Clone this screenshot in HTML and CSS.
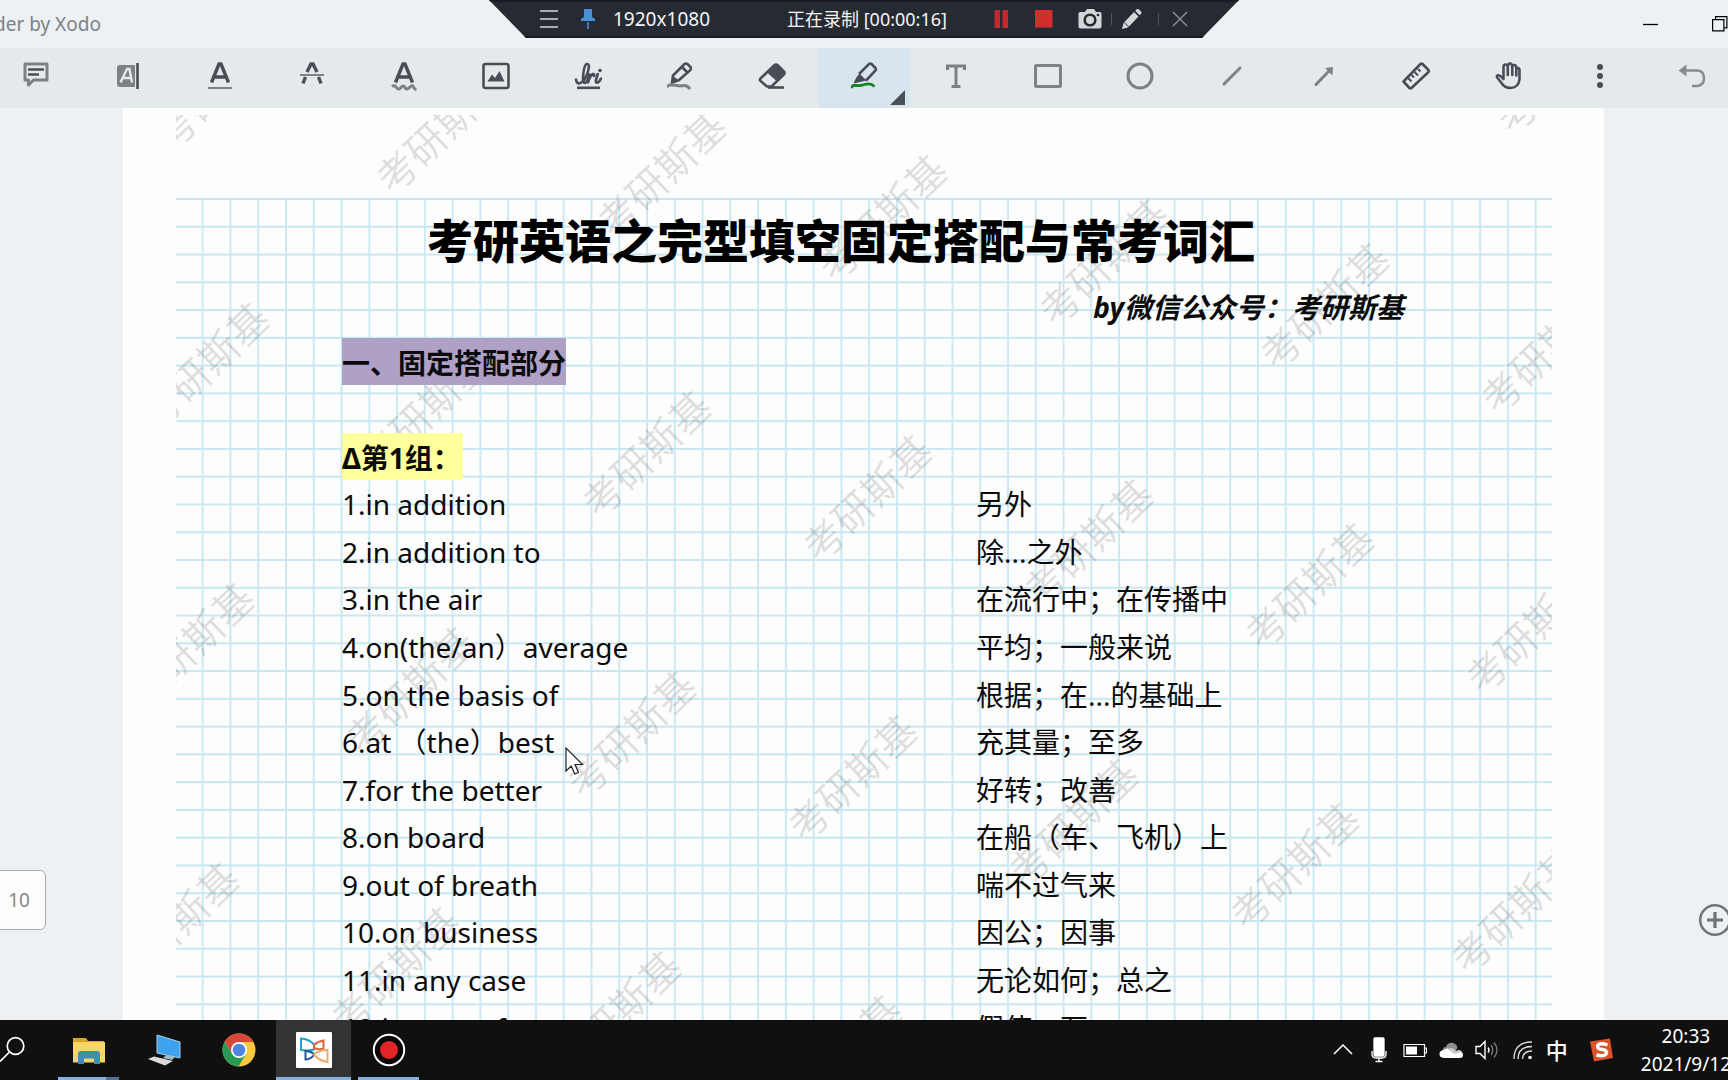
FILE: index.html
```html
<!DOCTYPE html>
<html lang="zh-CN">
<head>
<meta charset="utf-8">
<title>PDF Reader by Xodo</title>
<link rel="stylesheet" href="styles.css">
</head>
<body>
<header class="titlebar">
  <span class="app-name">der by Xodo</span>
  <div class="window-controls">
    <button class="plain" aria-label="Minimize"><svg width="16" height="16" viewBox="0 0 16 16"><path d="M0 8.5H15" stroke="#000" stroke-width="1.3"/></svg></button>
    <button class="plain" aria-label="Restore"><svg width="16" height="16" viewBox="0 0 16 16" fill="none" stroke="#000" stroke-width="1.2"><path d="M.6 3.6h11.3v11.3H.6zM3.6 3.6V.6h11.3v11.3h-3"/></svg></button>
  </div>
</header>

<section class="recorder" aria-label="Screen recorder">
  <button class="plain rec-menu" aria-label="Menu"><svg width="18" height="20" viewBox="0 0 18 20" stroke="#a9adb0" stroke-width="1.8"><path d="M0 2h18M0 10h18M0 18h18"/></svg></button>
  <button class="plain rec-pin" aria-label="Pin"><svg width="16" height="22" viewBox="0 0 16 22" fill="#4a90d9"><path d="M4 1h8v8l3 2v2H1v-2l3-2zM7.200 14h1.600v7H7.200z"/></svg></button>
  <span class="rec-size">1920x1080</span>
  <span class="rec-time">正在录制 [00:00:16]</span>
  <div class="rec-actions">
    <button class="plain" aria-label="Pause"><svg width="15" height="20" viewBox="0 0 15 20" fill="#c02a2e"><path d="M.5 1h5.500v18H.5zM8.500 1H14v18H8.500z"/></svg></button>
    <button class="plain" aria-label="Stop"><svg width="18" height="20" viewBox="0 0 18 20"><path d="M0 1h17.500v17.500H0z" fill="#d12e2c"/></svg></button>
    <button class="plain" aria-label="Snapshot"><svg width="24" height="22" viewBox="0 0 24 22"><path d="M2 4h5l2-3h7l2 3h4q1.500 0 1.500 1.500v13q0 2-2 2h-19q-2 0-2-2v-13Q.5 4 2 4z" fill="#d3d6d8"/><circle cx="12" cy="12" r="5.300" fill="none" stroke="#262b33" stroke-width="2.600"/><circle cx="20" cy="7" r="1.300" fill="#262b33"/></svg></button>
    <i class="rec-divider"></i>
    <button class="plain" aria-label="Draw"><svg width="20" height="22" viewBox="0 0 20 22" fill="#d3d6d8"><path d="M0 21l1.500-6L12 4l4.500 4.500L6 19.500zM13.200 2.800l1.500-1.500q1-.8 2 0l2.500 2.500q.8 1 0 2l-1.500 1.500z"/><path d="M2.300 14.500l4.200 4.300" stroke="#262b33" stroke-width="1"/></svg></button>
    <i class="rec-divider"></i>
    <button class="plain" aria-label="Close"><svg width="16" height="16" viewBox="0 0 16 16" stroke="#8f9397" stroke-width="1.400"><path d="M1 1l14 14M15 1L1 15"/></svg></button>
  </div>
</section>

<nav class="toolbar" aria-label="Annotation tools">
  <button class="tool" aria-label="Note"><svg viewBox="0 0 30 30"><path d="M4 3h22v16H12.500l-5 5v-5H4z" class="g-line" stroke-linejoin="round"/><path d="M7 8.500h16M7 13.500h11" class="d-line"/></svg></button>
  <button class="tool" aria-label="Highlight text"><svg viewBox="0 0 30 30"><path d="M5 4h17v22H7q-3 0-3-3V7q0-3 3-3z" class="g-fill"/><path d="M7.500 21.500L14 8h2.500l2.500 13.500M10 17h8" fill="none" stroke="#e4e9ec" stroke-width="2.400"/><path d="M24.500 2v26" class="d-line"/></svg></button>
  <button class="tool" aria-label="Underline"><svg viewBox="0 0 30 30"><path d="M6.500 21.500L14 3h2l7.500 18.500M9.500 16h11" class="d-line bold"/><path d="M3 27h24" class="g-line thin"/></svg></button>
  <button class="tool" aria-label="Strikeout"><svg viewBox="0 0 30 30"><path d="M10 11l4-8h2l4 8M8.500 16L6 22.500M21.500 16l2.500 6.500" class="d-line bold"/><path d="M3 14h24" class="g-line thin"/></svg></button>
  <button class="tool" aria-label="Squiggly"><svg viewBox="0 0 30 30"><path d="M6.500 21.500L14 3h2l7.500 18.500M9.500 16h11" class="d-line bold"/><path d="M3 25.500q2.500-2 4.500 1t4.500 0 4 0 4.500 0 4-.5 3 2.500" class="g-line"/></svg></button>
  <button class="tool" aria-label="Image"><svg viewBox="0 0 30 30"><rect x="2.500" y="3" width="25" height="24" rx="2" class="d-line"/><path d="M6.500 20.500l4.500-7 3 3.500 4.500-7 5 10.500z" class="d-fill"/></svg></button>
  <button class="tool" aria-label="Signature"><svg viewBox="0 0 30 30"><path d="M3 18.500q.5 5 4.500 3.500Q14 18 16 6q0-3.500-2.500-3Q10.500 5 10 17q0 5 2 5 3-2 4.500-8.500L15 21.500q2-7 5-8.500 2 0 1 2M24.800 13l-2 6.500q0 3 2 2 2-1 3.200-4" class="d-line" stroke-linecap="round" stroke-linejoin="round"/><circle cx="27" cy="9.500" r="1.800" class="d-fill"/><path d="M4 26.800h23" class="d-line"/></svg></button>
  <button class="tool" aria-label="Pencil"><svg viewBox="0 0 30 30"><path d="M8 14.500L19.500 3q1.500-1 3 0l3 3q1 1.500 0 3L14 19l-7 2.500z" class="d-line"/><path d="M17 6l5.500 5.500" class="d-line"/><path d="M8 14.500L13.500 19.500 6 22.500z" class="d-fill"/><path d="M4 26q-2-2 2-2t9 1q7-2 10 3" class="g-line"/></svg></button>
  <button class="tool" aria-label="Eraser"><svg viewBox="0 0 30 30"><path d="M3 18L17.500 4q1.500-1 3 0l6.500 6.500q1 1.500 0 3L14.500 25.500H10L3 19.500z" class="d-line"/><path d="M10 11.500L18 4h2l7.500 7.500v2L20 20.500z" class="d-fill"/><path d="M11 26.500h16" class="d-line"/></svg></button>
  <button class="tool active" aria-label="Highlighter" aria-pressed="true"><svg viewBox="0 0 30 30"><path d="M10 13L20 3q1.500-1 2.500 0l4 4q.8 1.500 0 2.500L17 19.500" class="d-line"/><path d="M10.500 12.500l7 7L11 21l-6.500 1.500L7 17z" class="d-fill"/><path d="M3.500 27q-1.500-3 3-2.500 5 .5 9-1 6-2 10 2" fill="none" stroke="#15811f" stroke-width="2.800"/></svg></button>
  <button class="tool" aria-label="Text"><svg viewBox="0 0 30 30"><path d="M6.500 9V5h17v4M15 5v20.500M10.500 25.500h9" class="g-line"/></svg></button>
  <button class="tool" aria-label="Rectangle"><svg viewBox="0 0 30 30"><rect x="2.500" y="4.500" width="25" height="21" rx="1" class="g-line"/></svg></button>
  <button class="tool" aria-label="Ellipse"><svg viewBox="0 0 30 30"><circle cx="15" cy="15" r="12" class="g-line"/></svg></button>
  <button class="tool" aria-label="Line"><svg viewBox="0 0 30 30"><path d="M7 23L23 7" class="g-line" stroke-linecap="round"/></svg></button>
  <button class="tool" aria-label="Arrow"><svg viewBox="0 0 30 30"><path d="M7 23.500L20 10" class="g-line" stroke-linecap="round"/><path d="M16 7l8-1-.5 8.500z" class="g-fill"/></svg></button>
  <button class="tool" aria-label="Ruler"><svg viewBox="0 0 30 30"><path d="M2.500 20.500L19.500 3q1-.8 2 0l6 6q.8 1 0 2L10.500 27q-1 .8-2 0z" class="d-line" stroke-linejoin="round"/><path d="M7 17l3.500 3.500M10.500 14l2.500 2.500M13.500 11l3.500 3.500M17 8l2.500 2.500" class="d-line thin"/></svg></button>
  <button class="tool" aria-label="Pan"><svg viewBox="0 0 30 30" stroke-linecap="round" stroke-linejoin="round"><path d="M10.500 17V6q0-2.500 2-2.500T14.800 6q0-3.500 2.200-3.500T19.300 6q.2-2 2-2t2 2.500v2q.2-1.500 1.600-1.500t1.600 2V18q-.5 8.500-9 9-6 0-9-5l-4-5q-1.500-2 .5-2.800 2-.2 5.500 3.800M14.800 6v8M19.300 6v8M23.300 8v6.500" class="d-line"/></svg></button>
  <button class="tool" aria-label="More"><svg viewBox="0 0 30 30" class="d-fill"><circle cx="15" cy="6" r="3"/><circle cx="15" cy="15" r="3"/><circle cx="15" cy="24" r="3"/></svg></button>
  <button class="tool" aria-label="Undo"><svg viewBox="0 0 30 30"><path d="M8 9.500h12.500q6.500.5 6.500 7.500t-6.500 8H15" fill="none" stroke="#898c8f" stroke-width="2.600"/><path d="M1.500 9.500L9.500 3.500v12z" fill="#898c8f"/></svg></button>
</nav>

<main class="viewer">
  <article class="page">
    <svg class="paper" aria-hidden="true">
      <defs>
        <pattern id="grid" x="25.700" y="83" width="27.770" height="27.770" patternUnits="userSpaceOnUse"><path d="M0 1H28M1 0V28" stroke="#c8e7f1" stroke-width="1.800"/></pattern>
        <g id="marks">
          <text class="mark" transform="translate(28 251) rotate(-44)">考研斯基</text>
          <text class="mark" transform="translate(249 295) rotate(-44)">考研斯基</text>
          <text class="mark" transform="translate(470 339) rotate(-44)">考研斯基</text>
          <text class="mark" transform="translate(691 383) rotate(-44)">考研斯基</text>
          <text class="mark" transform="translate(912 427) rotate(-44)">考研斯基</text>
          <text class="mark" transform="translate(1133 471) rotate(-44)">考研斯基</text>
          <text class="mark" transform="translate(1354 515) rotate(-44)">考研斯基</text>
        </g>
      </defs>
      <rect y="83" width="100%" height="100%" fill="url(#grid)"/>
      <use href="#marks" x="30" y="-560"/>
      <use href="#marks" x="15" y="-280"/>
      <use href="#marks"/>
      <use href="#marks" x="-15" y="280"/>
      <use href="#marks" x="-30" y="560"/>
    </svg>
    <div class="content">
      <h1>考研英语之完型填空固定搭配与常考词汇</h1>
      <p class="byline">by微信公众号：考研斯基</p>
      <h2><span class="hl purple">一、固定搭配部分</span></h2>
      <h3><span class="hl yellow">Δ第1组：</span></h3>
      <table class="words">
        <tbody>
          <tr><td>1.in addition</td><td>另外</td></tr>
          <tr><td>2.in addition to</td><td>除...之外</td></tr>
          <tr><td>3.in the air</td><td>在流行中；在传播中</td></tr>
          <tr><td>4.on(the/an）average</td><td>平均；一般来说</td></tr>
          <tr><td>5.on the basis of</td><td>根据；在...的基础上</td></tr>
          <tr><td>6.at （the）best</td><td>充其量；至多</td></tr>
          <tr><td>7.for the better</td><td>好转；改善</td></tr>
          <tr><td>8.on board</td><td>在船（车、飞机）上</td></tr>
          <tr><td>9.out of breath</td><td>喘不过气来</td></tr>
          <tr><td>10.on business</td><td>因公；因事</td></tr>
          <tr><td>11.in any case</td><td>无论如何；总之</td></tr>
          <tr><td>12.in case of</td><td>假使；万一</td></tr>
        </tbody>
      </table>
    </div>
  </article>
  <button class="page-number" aria-label="Page">10</button>
  <button class="plain zoom-in" aria-label="Zoom in"><svg width="34" height="34" viewBox="0 0 34 34" fill="none" stroke="#6f7477"><circle cx="17" cy="17" r="14.800" stroke-width="2.500"/><path d="M17 9v16M9 17h16" stroke-width="3.200"/></svg></button>
  <svg class="cursor" width="19" height="28" viewBox="0 0 19 28" aria-hidden="true"><path d="M1 1v23l5.200-5 3.600 8 3.700-1.600-3.500-7.900H17.500z" fill="#fff" stroke="#222" stroke-width="1.200"/></svg>
</main>

<footer class="taskbar">
  <div class="apps">
    <button class="app" aria-label="Search"><svg width="28" height="32" viewBox="0 0 28 32" fill="none" stroke="#fff" stroke-width="1.700"><circle cx="15.500" cy="12" r="8.300"/><path d="M9.500 18L0 27.500"/></svg></button>
    <button class="app open stacked" aria-label="File Explorer"><svg width="34" height="32" viewBox="0 0 34 32"><path d="M1 4h13l2 3h16v7H1z" fill="#d9a428"/><path d="M1 8h32v20.500H1z" fill="#f8d568"/><path d="M6 30V20q0-3 3-3h16q3 0 3 3v10h-6v-5.500H12V30z" fill="#3d8fb5"/></svg></button>
    <button class="app" aria-label="This PC"><svg width="34" height="34" viewBox="0 0 34 34"><path d="M10 2l23 7v16l-23-5z" fill="#3fa2ee" stroke="#a8cfe6" stroke-width="1"/><path d="M19 22l9 2-3 3-9-2z" fill="#9fb9c6"/><path d="M1 26l6-2.500 19 4.500-8 4.500z" fill="#d8dadb"/></svg></button>
    <button class="app" aria-label="Chrome"><svg width="34" height="34" viewBox="0 0 34 34"><circle cx="17" cy="17" r="16.500" fill="#fbc93d"/><path d="M17 9h14.400A16.500 16.500 0 0 0 2.700 8.800L10 21z" fill="#d9463a"/><path d="M2.700 8.800A16.500 16.500 0 0 0 16.500 33.500L24 21 17 17l-7 4z" fill="#279a55"/><circle cx="17" cy="17" r="8" fill="#fff"/><circle cx="17" cy="17" r="6.300" fill="#4c84e0"/></svg></button>
    <button class="app open current" aria-label="Xodo"><svg width="36" height="36" viewBox="0 0 36 36" fill="none" stroke-width="2"><rect width="36" height="36" rx="1" fill="#fff"/><path d="M5 6.500q8 .5 13 6v5Q12 19 5 18z" stroke="#1f9fc9"/><path d="M27.500 8.500q-6 1-9.500 4.500v3q5 2 9.500.5z" stroke="#d9653c"/><path d="M9.500 19q5 0 8.500 3v1q-3 4-8.500 4.500z" stroke="#255a91"/><path d="M31.500 18q-8 0-13 4v1q5 6 13 7z" stroke="#efae68"/></svg></button>
    <button class="app open" aria-label="Recorder"><svg width="34" height="34" viewBox="0 0 34 34"><circle cx="17" cy="17" r="15.200" fill="#0a0405" stroke="#fff" stroke-width="2"/><circle cx="17" cy="17" r="9" fill="#e22427"/></svg></button>
  </div>
  <div class="tray">
    <span class="status"><svg width="20" height="26" viewBox="0 0 20 26" fill="none" stroke="#fff" stroke-width="1.500"><path d="M1 17l9-9 9 9"/></svg></span>
    <span class="status"><svg width="16" height="26" viewBox="0 0 16 26" fill="none" stroke="#fff" stroke-width="1.300"><rect x="3" y="1" width="10" height="18" rx="1" fill="#fff"/><path d="M1 14v3q0 4 4 4h6q4 0 4-4v-3M8 21v3.500M4.500 24.500h7"/></svg></span>
    <span class="status"><svg width="24" height="26" viewBox="0 0 24 26" fill="none" stroke="#fff" stroke-width="1.200"><path d="M1 7.500h20.500v12H1zM21.500 11h2v5h-2"/><path d="M3 9.500h11v8H3z" fill="#fff" stroke="none"/></svg></span>
    <span class="status"><svg width="24" height="26" viewBox="0 0 24 26"><path d="M4 14q-1-4 3-4 2-5 7-4 4 1 4.500 5l-6 8z" fill="#8d8d8d"/><path d="M5 21q-5-.5-4.500-4.500Q1 13 5 13q3-3 7 0l4 2q2-2.500 5-1 3 1 3 4t-3 3z" fill="#fff"/><path d="M9 12q5-3 8 2l3-1q2 0 3 2l-8 2z" fill="#c9c9c9"/></svg></span>
    <span class="status"><svg width="24" height="26" viewBox="0 0 24 26" fill="none" stroke="#fff" stroke-width="1.400"><path d="M1 9.500h4L10 4.500v17L5 16.500H1z"/><path d="M13 10.500q2 2.500 0 5"/><path d="M16 8q3.500 5 0 10M19 5.500q6 7.500 0 15" stroke="#777"/></svg></span>
    <span class="status"><svg width="20" height="26" viewBox="0 0 20 26" fill="none" stroke="#ddd" stroke-width="1.400"><path d="M1 22Q1 5 19 5M5 22Q5 9.500 19 9.500M9.500 22q.5-8 9.500-8"/><circle cx="17" cy="20.500" r="1.800" fill="#fff" stroke="none"/></svg></span>
    <span class="ime">中</span>
    <span class="status wide"><svg width="26" height="26" viewBox="0 0 26 26"><path d="M2 4.500L22 1.500 25 21 6 24.500z" fill="#d9542b"/><path d="M19.500 8q-8-3-10 1-.5 3 5 3.500 5 1 4 4-2 3.500-10 1.500" fill="none" stroke="#fff" stroke-width="3.400"/></svg></span>
    <time class="clock" datetime="2021-09-12T20:33"><span>20:33</span><span>2021/9/12</span></time>
  </div>
</footer>
</body>
</html>
```
FILE: styles.css
```css
* { box-sizing: border-box; }

body {
  margin: 0;
  height: 100vh;
  display: flex;
  flex-direction: column;
  overflow: hidden;
  position: relative;
  background: #edf1f3;
  font-family: "Noto Sans", "Noto Sans CJK SC", sans-serif;
}

svg { display: block; flex: none; }

button { font: inherit; cursor: pointer; }

.plain {
  display: flex;
  padding: 0;
  border: 0;
  background: none;
}

/* Title bar */
.titlebar {
  flex: none;
  height: 48px;
  display: flex;
  align-items: center;
  justify-content: space-between;
}

.app-name {
  margin-left: -6px;
  font-size: 19px;
  color: #7d8286;
}

.window-controls { display: flex; gap: 53px; }

/* Floating recorder strip */
.recorder {
  position: absolute;
  top: 0;
  left: 50%;
  width: 750px;
  height: 38px;
  margin-left: -375px;
  padding: 0 51px;
  display: flex;
  align-items: center;
  color: #f4f4f4;
  background: #262b33;
  border-top: 2px solid #191d23;
  border-bottom: 2px solid #191d23;
  clip-path: polygon(0 0, 100% 0, calc(100% - 37px) 100%, 37px 100%);
}

.rec-pin { margin-left: 22px; }
.rec-size { margin-left: 17px; font-size: 19px; line-height: 34px; }
.rec-time { margin-left: 77px; font-size: 18px; line-height: 34px; white-space: nowrap; }
.rec-actions { margin-left: auto; display: flex; align-items: center; }
.rec-actions .plain:nth-child(2) { margin-left: 26px; }
.rec-actions .plain:nth-child(3) { margin-left: 25px; }
.rec-divider { width: 1px; height: 12px; margin: 0 10px 0 9px; background: #4f545a; }
.rec-divider + .plain:last-child { margin-left: 3px; }
.rec-divider:nth-child(6) { margin-left: 16px; }

/* Tools */
.toolbar {
  flex: none;
  height: 60px;
  display: flex;
  margin-left: -10px;
  background: #e4e9ec;
  overflow: hidden;
}

.tool {
  flex: 0 0 92px;
  display: flex;
  justify-content: center;
  padding: 13px 0 0;
  border: 0;
  background: none;
  position: relative;
}

.tool svg { width: 30px; height: 30px; }

.tool.active { background: #d8e5ee; }

.tool.active::after {
  content: "";
  position: absolute;
  right: 5px;
  bottom: 3px;
  border-left: 15px solid transparent;
  border-bottom: 15px solid #4a5058;
}

.d-line { fill: none; stroke: #494d55; stroke-width: 2.600; }
.g-line { fill: none; stroke: #7e8183; stroke-width: 3; }
.thin { stroke-width: 2; }
.bold { stroke-width: 3.400; }
.d-fill { fill: #494d55; }
.g-fill { fill: #7e8183; }

/* Document */
.viewer {
  flex: 1;
  min-height: 0;
  overflow: hidden;
  position: relative;
}

.page {
  position: relative;
  margin: 0 124px 0 123px;
  min-height: 100%;
  background: #fdfdfd;
  color: #0b0b0b;
}

.paper {
  position: absolute;
  top: 7px;
  left: 53px;
  width: calc(100% - 105px);
  height: calc(100% - 7px);
}

.mark {
  font-size: 40px;
  text-anchor: middle;
  dominant-baseline: central;
  fill: #000;
  fill-opacity: 0.120;
}

.content {
  position: relative;
  padding: 96px 200px 0 219px;
  font-size: 28px;
  line-height: 47px;
}

h1 {
  margin: 0;
  padding-right: 64px;
  color: #000;
  font-size: 46px;
  font-weight: 900;
  line-height: 72px;
  text-align: center;
  white-space: nowrap;
}

.byline {
  margin: 8px 0 7px;
  font-weight: bold;
  font-style: italic;
  text-align: right;
}

h2, h3 { margin: 0; font-size: 28px; line-height: 44px; }
h3 { margin-top: 48px; }

.hl { display: inline-block; vertical-align: top; padding: 3px 0 0; }
.purple { background: #afa0c6; }
.yellow { padding-right: 2px; background: #ffff9b; }

.words {
  width: 100%;
  height: 571px;
  border-collapse: collapse;
  table-layout: fixed;
  line-height: 44px;
}

.words td { padding: 1px 0 0; white-space: nowrap; }
.words td:first-child { width: 634px; }

.page-number {
  position: absolute;
  left: -8px;
  bottom: 90px;
  width: 54px;
  height: 60px;
  padding: 0 15px 0 0;
  text-align: right;
  font-size: 19px;
  color: #85888a;
  background: #fdfdfd;
  border: 1px solid #a9acae;
  border-radius: 6px;
}

.zoom-in { position: absolute; right: -4px; bottom: 83px; }

.cursor { position: absolute; left: 565px; top: 639px; }

/* Taskbar */
.taskbar {
  flex: none;
  height: 60px;
  display: flex;
  justify-content: space-between;
  background: #101010;
  color: #fff;
}

.apps { display: flex; margin-left: -24px; }

.app {
  width: 75px;
  display: flex;
  align-items: center;
  justify-content: center;
  padding: 0;
  border: 0;
  background: none;
  position: relative;
}

.app.current { background: #333; }

.app.open::after {
  content: "";
  position: absolute;
  left: 7px;
  right: 7px;
  bottom: 0;
  height: 3px;
  background: #87b1da;
}

.app.current::after { left: 0; right: 0; }
.app.stacked::after { background: linear-gradient(90deg, #87b1da 78%, #56748f 78%); }

.tray {
  display: flex;
  align-items: center;
  margin-right: -3px;
}

.status { width: 36px; display: flex; justify-content: center; }
.status.wide { width: 56px; }

.ime {
  width: 32px;
  font-size: 22px;
  line-height: 30px;
  text-align: center;
  font-weight: 500;
}

.clock {
  margin-left: 12px;
  display: flex;
  flex-direction: column;
  text-align: center;
  font-size: 19px;
  line-height: 28px;
}
```
